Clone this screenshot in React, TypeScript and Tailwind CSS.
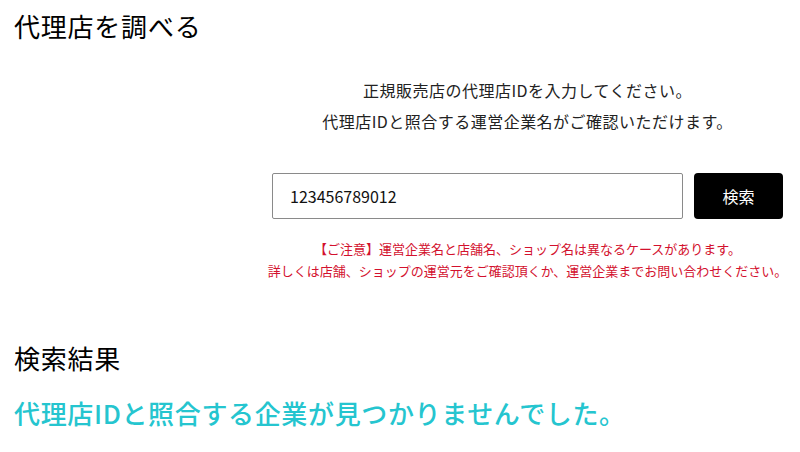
import React from "react";

export default function App() {
  return (
    <div className="w-[800px] h-[452px] bg-white px-[14px] text-black font-['Noto_Sans_CJK_JP','Noto_Sans',sans-serif] overflow-hidden">
      <h1 className="pt-[10px] text-[26px] leading-[32px] font-normal tracking-[0.03em]">代理店を調べる</h1>
      <div className="ml-[258px] w-[511px] flex flex-col">
        <div className="mt-[33px] text-center text-[16px] leading-[31px] text-[#222] tracking-[0.03em]">
          <p>正規販売店の代理店IDを入力してください。</p>
          <p>代理店IDと照合する運営企業名がご確認いただけます。</p>
        </div>
        <div className="mt-[36px] flex gap-[11px]">
          <input
            className="h-[46px] w-[411px] border border-[#8a8a8a] rounded-[2px] px-[17px] text-[16px] text-[#111] outline-none"
            defaultValue="123456789012"
          />
          <button className="h-[46px] w-[89px] bg-black text-white rounded-[4px] text-[16px]">検索</button>
        </div>
        <div className="mt-[19px] flex flex-col items-center text-[13px] leading-[22px] text-[#d3112e] whitespace-nowrap">
          <p>【ご注意】運営企業名と店舗名、ショップ名は異なるケースがあります。</p>
          <p>詳しくは店舗、ショップの運営元をご確認頂くか、運営企業までお問い合わせください。</p>
        </div>
      </div>
      <h2 className="mt-[60px] text-[26px] leading-[32px] font-normal tracking-[0.03em]">検索結果</h2>
      <p className="mt-[21px] text-[26px] leading-[36px] font-medium tracking-[0.025em] text-[#25c5cf]">代理店IDと照合する企業が見つかりませんでした。</p>
    </div>
  );
}
